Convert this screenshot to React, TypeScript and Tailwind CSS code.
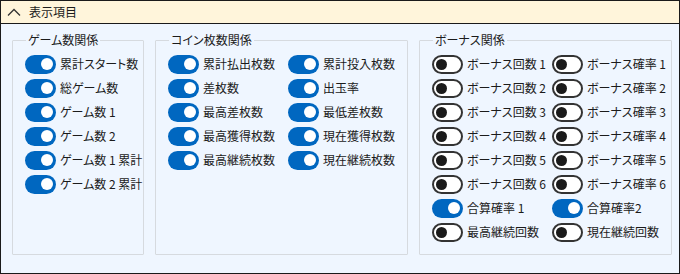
import React from 'react'

const font = { fontFamily: '"Noto Sans CJK JP", "Noto Sans", sans-serif' }

function Toggle({ on }: { on: boolean }) {
  if (on) {
    return (
      <span className="w-[31px] h-[19px] rounded-full bg-[#0067c0] flex items-center justify-end pr-[3px] shrink-0">
        <span className="w-[12px] h-[12px] rounded-full bg-white" />
      </span>
    )
  }
  return (
    <span className="w-[31px] h-[19px] rounded-full border-2 border-[#333333] bg-white flex items-center pl-[2px] shrink-0">
      <span className="w-[11px] h-[11px] rounded-full bg-[#1a1a1a]" />
    </span>
  )
}

function Item({ label, on }: { label: string; on: boolean }) {
  return (
    <div className="h-[24px] flex items-center gap-[4px] w-[120px]">
      <Toggle on={on} />
      <span className="text-[12px] text-[#1b1b1b] whitespace-nowrap leading-none">{label}</span>
    </div>
  )
}

function Group({ title, width, cols, items }: { title: string; width: string; cols: number; items: [string, boolean][] }) {
  return (
    <fieldset className={`${width} min-w-0 shrink-0 h-[223px] border border-[#d6dadf] rounded-[1px] pl-[12px] pt-[4px] overflow-visible`}>
      <legend className="ml-[1px] px-[2px] text-[12px] text-[#1b1b1b] leading-[16px]">{title}</legend>
      <div className={cols === 2 ? 'grid grid-cols-[120px_120px]' : 'flex flex-col'}>
        {items.map(([l, o]) => (
          <Item key={l} label={l} on={o} />
        ))}
      </div>
    </fieldset>
  )
}

export default function App() {
  return (
    <div className="w-[680px] h-[274px] border border-[#1a1a1a] bg-[#eff6ff] flex flex-col [font-feature-settings:'palt']" style={font}>
      <div className="h-[23px] bg-[#fff5db] border-b border-[#1a1a1a] flex items-center gap-[8px] pl-[6px]">
        <svg width="14" height="8" viewBox="0 0 14 8" fill="none" stroke="#333" strokeWidth="1.3">
          <path d="M1 7.5 L7 1.5 L13 7.5" />
        </svg>
        <span className="text-[12px] text-[#1b1b1b]">表示項目</span>
      </div>
      <div className="flex gap-[11px] pl-[11px] pt-[8px]">
        <Group
          title="ゲーム数関係"
          width="w-[132px]"
          cols={1}
          items={[
            ['累計スタート数', true],
            ['総ゲーム数', true],
            ['ゲーム数 1', true],
            ['ゲーム数 2', true],
            ['ゲーム数 1 累計', true],
            ['ゲーム数 2 累計', true],
          ]}
        />
        <Group
          title="コイン枚数関係"
          width="w-[253px]"
          cols={2}
          items={[
            ['累計払出枚数', true],
            ['累計投入枚数', true],
            ['差枚数', true],
            ['出玉率', true],
            ['最高差枚数', true],
            ['最低差枚数', true],
            ['最高獲得枚数', true],
            ['現在獲得枚数', true],
            ['最高継続枚数', true],
            ['現在継続枚数', true],
          ]}
        />
        <Group
          title="ボーナス関係"
          width="w-[253px]"
          cols={2}
          items={[
            ['ボーナス回数 1', false],
            ['ボーナス確率 1', false],
            ['ボーナス回数 2', false],
            ['ボーナス確率 2', false],
            ['ボーナス回数 3', false],
            ['ボーナス確率 3', false],
            ['ボーナス回数 4', false],
            ['ボーナス確率 4', false],
            ['ボーナス回数 5', false],
            ['ボーナス確率 5', false],
            ['ボーナス回数 6', false],
            ['ボーナス確率 6', false],
            ['合算確率 1', true],
            ['合算確率2', true],
            ['最高継続回数', false],
            ['現在継続回数', false],
          ]}
        />
      </div>
    </div>
  )
}
